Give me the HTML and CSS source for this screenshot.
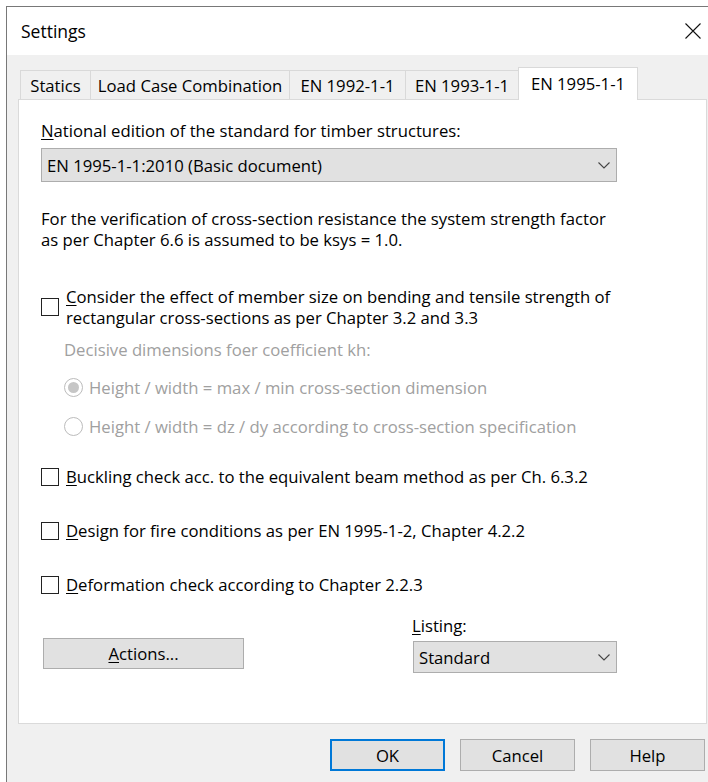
FILE: index.html
```html
<!DOCTYPE html>
<html lang="en">
<head>
<meta charset="utf-8">
<title>Settings</title>
<link rel="stylesheet" href="styles.css">
</head>
<body>
<div class="dialog">
  <header class="titlebar">
    <span class="title">Settings</span>
    <span class="close" aria-label="Close">
      <svg width="16" height="16" viewBox="0 0 16 16"><path d="M0.5 0.5 L15.5 15.5 M15.5 0.5 L0.5 15.5" stroke="#111" stroke-width="1.1" fill="none"/></svg>
    </span>
  </header>
  <div class="dialog-body">
    <div class="tabs">
      <div class="tab tab-statics">Statics</div>
      <div class="tab tab-combination">Load Case Combination</div>
      <div class="tab tab-1992">EN 1992-1-1</div>
      <div class="tab tab-1993">EN 1993-1-1</div>
      <div class="tab tab-1995 active">EN 1995-1-1</div>
    </div>
    <div class="panel">
      <div class="content">
        <div class="label"><u>N</u>ational edition of the standard for timber structures:</div>
        <div class="combo combo-wide">
          <span>EN 1995-1-1:2010 (Basic document)</span>
          <svg class="chev" width="12" height="7" viewBox="0 0 12 7"><path d="M0.5 0.5 L6 6 L11.5 0.5" stroke="#444" stroke-width="1.1" fill="none"/></svg>
        </div>
        <p class="note">For the verification of cross-section resistance the system strength factor<br>as per Chapter 6.6 is assumed to be ksys = 1.0.</p>
        <div class="check check-first"><span class="box"></span><span class="check-text"><u>C</u>onsider the effect of member size on bending and tensile strength of<br>rectangular cross-sections as per Chapter 3.2 and 3.3</span></div>
        <div class="sub">
          <div class="sub-label">Decisive dimensions foer coefficient kh:</div>
          <div class="radio radio-first"><span class="dot dot-on"></span><span>Height / width = max / min cross-section dimension</span></div>
          <div class="radio"><span class="dot"></span><span>Height / width = dz / dy according to cross-section specification</span></div>
        </div>
        <div class="check check-after-sub"><span class="box"></span><span class="check-text"><u>B</u>uckling check acc. to the equivalent beam method as per Ch. 6.3.2</span></div>
        <div class="check"><span class="box"></span><span class="check-text"><u>D</u>esign for fire conditions as per EN 1995-1-2, Chapter 4.2.2</span></div>
        <div class="check"><span class="box"></span><span class="check-text"><u>D</u>eformation check according to Chapter 2.2.3</span></div>
        <div class="bottom-row">
          <button class="btn btn-actions"><u>A</u>ctions...</button>
          <div class="listing">
            <div class="label"><u>L</u>isting:</div>
            <div class="combo combo-small">
              <span>Standard</span>
              <svg class="chev" width="12" height="7" viewBox="0 0 12 7"><path d="M0.5 0.5 L6 6 L11.5 0.5" stroke="#444" stroke-width="1.1" fill="none"/></svg>
            </div>
          </div>
        </div>
      </div>
    </div>
    <div class="footer">
      <button class="btn btn-default">OK</button>
      <button class="btn">Cancel</button>
      <button class="btn">Help</button>
    </div>
  </div>
</div>
</body>
</html>
```

FILE: styles.css
```css
html, body {
  margin: 0;
  padding: 0;
  background: #fff;
  overflow: hidden;
}

body {
  font-family: "Segoe UI", "Open Sans", "Noto Sans", sans-serif;
  font-size: 16.7px;
  line-height: 21px;
  color: #000;
}

u {
  text-decoration: underline;
  text-underline-offset: 2px;
  text-decoration-thickness: 1px;
}

/* window frame */
.dialog {
  margin: 6px 0 0 6px;
  width: 713px;
  border: 1px solid #787878;
  border-bottom: none;
  box-sizing: border-box;
  background: #f0f0f0;
}

.titlebar {
  height: 48px;
  background: #fff;
  display: flex;
  align-items: center;
  justify-content: space-between;
  padding: 0 17px 0 14px;
}

.title {
  font-size: 17.5px;
}

.close {
  display: flex;
}

.dialog-body {
  padding: 0 11px 40px;
}

/* tab strip */
.tabs {
  display: flex;
  align-items: flex-end;
  height: 32px;
  padding-top: 12px;
  margin-left: 2px;
}

.tab {
  height: 29px;
  box-sizing: border-box;
  border: 1px solid #d9d9d9;
  border-bottom: none;
  margin-right: -1px;
  display: flex;
  align-items: center;
  justify-content: center;
  background: #f0f0f0;
  white-space: nowrap;
}

.tab-statics { width: 71px; }
.tab-combination { width: 200px; }
.tab-1992 { width: 117px; }
.tab-1993 { width: 114px; }
.tab-1995 { width: 120px; }

.tab.active {
  height: 33px;
  margin-bottom: -1px;
  padding-bottom: 2px;
  background: #fff;
  position: relative;
  z-index: 1;
}

/* page of the active tab */
.panel {
  background: #fff;
  border: 1px solid #dadada;
  padding: 20px 22px 50px;
}

.content {
  width: 576px;
}

.label {
  white-space: nowrap;
}

.combo {
  display: flex;
  align-items: center;
  justify-content: space-between;
  box-sizing: border-box;
  background: #e1e1e1;
  border: 1px solid #adadad;
  padding: 0 6px 0 5px;
}

.combo-wide {
  margin-top: 7px;
  height: 34px;
}

.combo-small {
  margin-top: 5px;
  height: 32px;
}

.chev {
  display: block;
}

.note {
  margin: 26px 0 0;
  white-space: nowrap;
}

.check {
  display: flex;
  align-items: center;
  margin-top: 33px;
  white-space: nowrap;
}

.check-first {
  margin-top: 36px;
}

.check-after-sub {
  margin-top: 29px;
}

.box {
  width: 18px;
  height: 18px;
  box-sizing: border-box;
  border: 1px solid #222;
  background: #fff;
  margin-right: 7px;
  flex: none;
}

/* disabled option group */
.sub {
  margin-top: 11px;
  padding-left: 23px;
  color: #a0a0a0;
}

.radio {
  display: flex;
  align-items: center;
  margin-top: 18px;
  white-space: nowrap;
}

.radio-first {
  margin-top: 17px;
}

.dot {
  width: 19px;
  height: 19px;
  box-sizing: border-box;
  border: 1px solid #bcbcbc;
  border-radius: 50%;
  margin-right: 6px;
  flex: none;
  display: flex;
  align-items: center;
  justify-content: center;
}

.dot-on::after {
  content: "";
  width: 11px;
  height: 11px;
  border-radius: 50%;
  background: #c6c6c6;
}

/* actions and listing row */
.bottom-row {
  display: flex;
  justify-content: space-between;
  align-items: flex-start;
  margin-top: 20px;
}

.listing {
  width: 205px;
}

.listing .combo {
  margin-left: 1px;
}

.btn {
  font: inherit;
  color: #000;
  background: #e1e1e1;
  border: 1px solid #adadad;
  box-sizing: border-box;
  padding: 0;
  height: 32px;
  width: 115px;
}

.btn-actions {
  margin: 23px 0 0 2px;
  width: 201px;
  height: 31px;
}

.btn-default {
  border: 2px solid #0078d7;
}

.footer {
  display: flex;
  justify-content: flex-end;
  gap: 15px;
  padding: 15px 2px 0 0;
}
```
